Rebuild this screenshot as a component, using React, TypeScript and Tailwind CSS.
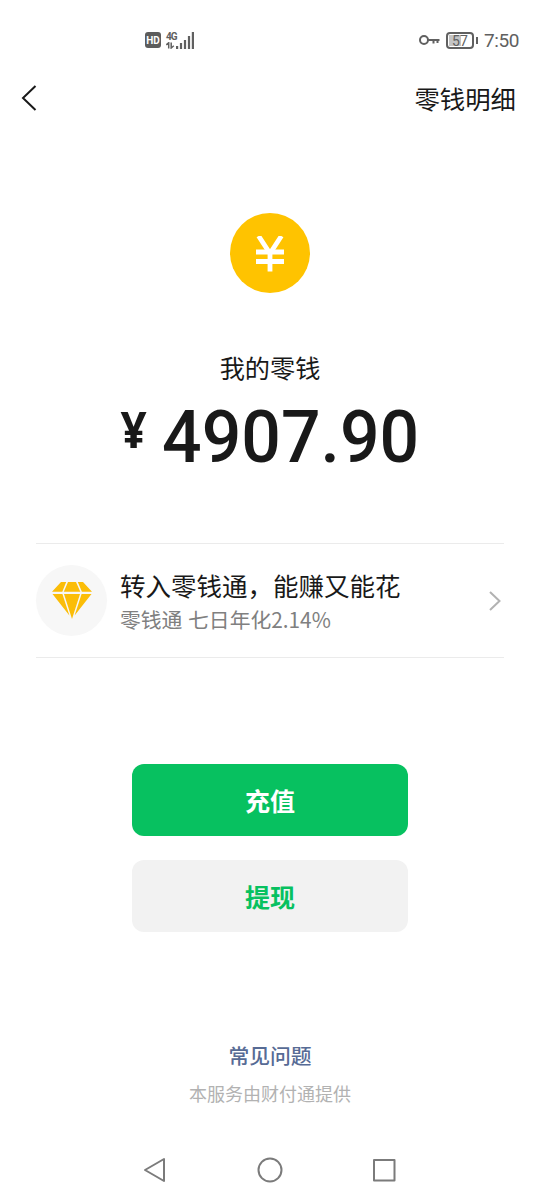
const StatusBar = () => (
  <div className="h-20 flex items-center justify-between pl-[145px] pr-[21px] text-[#606060]">
    <div className="flex items-center gap-[5px]">
      <div className="w-4 h-4 rounded-[3px] bg-[#5c5c5c] text-white font-['Roboto',sans-serif] font-bold text-[10px] leading-[17px] text-center">
        HD
      </div>
      <div className="flex items-end">
        <div className="flex flex-col w-[10px]">
          <span className="font-['Roboto',sans-serif] font-bold text-[10px] leading-[10px] tracking-[-1px]">4G</span>
          <svg width="9" height="7" viewBox="0 0 9 7" fill="none" stroke="currentColor" strokeWidth="1.5">
            <path d="M.3 2.800 2.700.8V6.500M5.200.5v5.500l2.600-2.200" />
          </svg>
        </div>
        <svg width="18" height="17" viewBox="0 0 18 17" fill="currentColor">
          <rect x="0" y="14" width="2.200" height="3" />
          <rect x="3.900" y="11" width="2.200" height="6" />
          <rect x="7.900" y="8" width="2.200" height="9" />
          <rect x="11.900" y="4" width="2.200" height="13" />
          <rect x="15.800" y="0" width="2.200" height="17" />
        </svg>
      </div>
    </div>
    <div className="flex items-center">
      <svg width="21" height="10" viewBox="0 0 21 10" fill="none" stroke="currentColor" strokeWidth="2">
        <circle cx="5" cy="5" r="4" />
        <path d="M9 5h11.500M14.500 5v3.500M18.500 5v3" />
      </svg>
      <div className="ml-[6px] w-[28px] h-[17px] border-2 border-[#606060] rounded-[4px] p-px">
        <div className="relative w-full h-full">
          <div className="h-full w-[57%] bg-[#c4c4c4]" />
          <span className="absolute inset-0 pt-px flex items-center justify-center font-['Roboto',sans-serif] text-[14px] leading-none">
            57
          </span>
        </div>
      </div>
      <div className="ml-[2px] w-[2px] h-[7px] bg-[#606060]" />
      <span className="ml-[6px] font-['Roboto',sans-serif] text-[19px] leading-6 tracking-[-0.4px] pt-[2px]">7:50</span>
    </div>
  </div>
);

const YenIcon = () => (
  <svg width="30" height="36" viewBox="0 0 30 36" fill="none" stroke="currentColor" strokeWidth="4.800">
    <path d="M3.600 0 15 17.500 26.400 0M15 15v20.500" />
    <path d="M1 16h28M1 25.500h28" />
  </svg>
);

const Diamond = () => (
  <svg width="40" height="37" viewBox="0 0 40 37" fill="#fbbd08">
    <path d="M9 0h5.200L10.300 9.800H0zM16 0h8l4.300 9.800H11.800zM25.800 0H31l9 9.800H29.900zM0.500 12h9.900l7 21.500zM12 12h16l-8 25zM29.600 12h9.900L22.600 33.500z" />
  </svg>
);

const SystemNav = () => (
  <div className="h-[60px] flex items-center justify-between self-stretch px-[142px] text-[#7b7b7b]">
    <svg width="26" height="26" viewBox="0 0 26 26" fill="none" stroke="currentColor" strokeWidth="2" strokeLinejoin="round">
      <path d="M3 13 22 2v22z" />
    </svg>
    <svg width="26" height="26" viewBox="0 0 26 26" fill="none" stroke="currentColor" strokeWidth="2">
      <circle cx="13" cy="13" r="11.500" />
    </svg>
    <svg width="26" height="26" viewBox="0 0 26 26" fill="none" stroke="currentColor" strokeWidth="2" strokeLinejoin="round">
      <rect x="2" y="3" width="20.500" height="20.500" />
    </svg>
  </div>
);

export default function App() {
  return (
    <div className="w-[540px] h-[1200px] bg-white text-[#191919] overflow-hidden flex flex-col font-['Noto_Sans_CJK_SC',sans-serif]">
      <StatusBar />

      <header className="h-9 flex items-center justify-between pl-[21px] pr-6">
        <svg width="16" height="26" viewBox="0 0 16 26" fill="none" stroke="currentColor" strokeWidth="2">
          <path d="M14.500 1 2 13l12.500 12" />
        </svg>
        <span className="text-[25.400px] leading-9">零钱明细</span>
      </header>

      <section className="flex flex-col items-center pt-[97px]">
        <div className="w-20 h-20 pt-[2px] rounded-full bg-[#ffc300] flex items-center justify-center text-white">
          <YenIcon />
        </div>
        <div className="mt-[56px] text-[25.200px] leading-9">我的零钱</div>
        <div className="mt-[11px] h-20 flex items-start font-['Roboto',sans-serif] font-medium">
          <span className="inline-block scale-x-90 font-['Open_Sans',sans-serif] text-[51px] leading-[64px] font-bold">¥</span>
          <span className="ml-[8px] -mr-[5px] inline-block scale-x-[0.955] text-[73px] leading-[83px]">4907.90</span>
        </div>
      </section>

      <section className="mx-9 mt-[67px] h-[115px] border-y border-[#ebebeb] flex items-center">
        <div className="w-[71px] h-[71px] rounded-full bg-[#f7f7f7] flex items-center justify-center">
          <Diamond />
        </div>
        <div className="ml-[13px] flex-1 pt-[3px]">
          <div className="text-[25.500px] leading-[34px]">转入零钱通，能赚又能花</div>
          <div className="text-[20.800px] leading-[34px] text-[#808080] [word-spacing:1px]">零钱通 七日年化2.14%</div>
        </div>
        <svg width="12" height="20" viewBox="0 0 12 20" fill="none" stroke="#b2b2b2" strokeWidth="2" className="mr-[3px]">
          <path d="m1 1 9.500 9L1 19" />
        </svg>
      </section>

      <section className="mt-[106px] flex flex-col items-center gap-6">
        <button className="w-[276px] h-[72px] pt-[2px] rounded-xl bg-[#07c160] text-white text-[25px] font-bold">充值</button>
        <button className="w-[276px] h-[72px] pt-[2px] rounded-xl bg-[#f2f2f2] text-[#07c160] text-[25px] font-bold">提现</button>
      </section>

      <footer className="mt-auto flex flex-col items-center">
        <a className="text-[20.800px] leading-[30px] font-medium text-[#576b95]">常见问题</a>
        <p className="mt-[10px] mb-[34px] text-[18px] leading-[26px] text-[#b2b2b2]">本服务由财付通提供</p>
        <SystemNav />
      </footer>
    </div>
  );
}
